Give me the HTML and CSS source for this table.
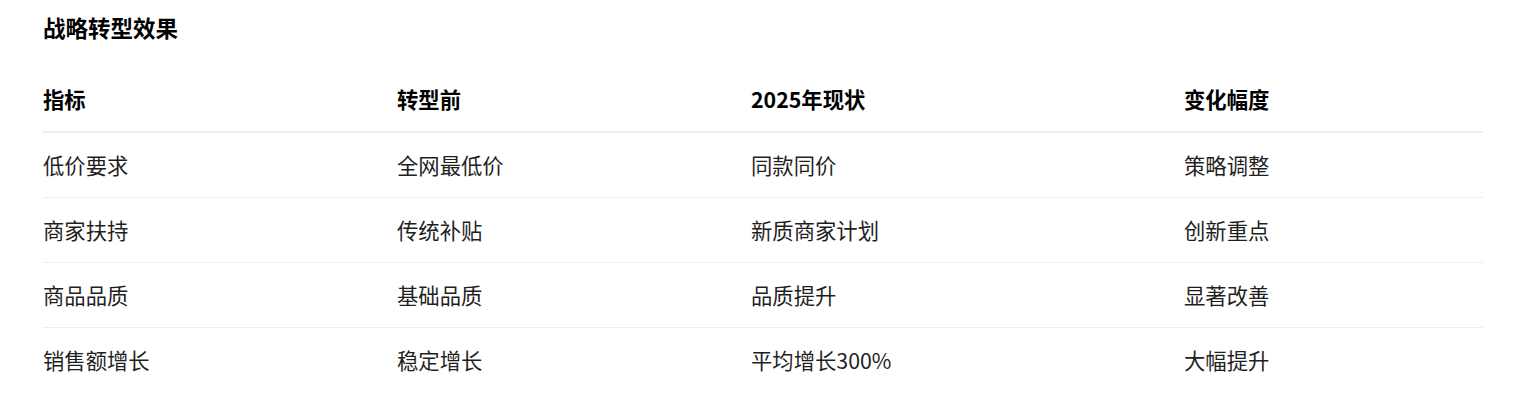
FILE: index.html
```html
<!DOCTYPE html>
<html lang="zh-CN">
<head>
<meta charset="utf-8">
<title>战略转型效果</title>
<link rel="stylesheet" href="styles.css">
</head>
<body>
<div class="page">
  <h3 class="title">战略转型效果</h3>
  <table class="data">
    <thead>
      <tr>
        <th class="c1">指标</th>
        <th class="c2">转型前</th>
        <th class="c3">2025年现状</th>
        <th class="c4">变化幅度</th>
      </tr>
    </thead>
    <tbody>
      <tr><td>低价要求</td><td>全网最低价</td><td>同款同价</td><td>策略调整</td></tr>
      <tr><td>商家扶持</td><td>传统补贴</td><td>新质商家计划</td><td>创新重点</td></tr>
      <tr><td>商品品质</td><td>基础品质</td><td>品质提升</td><td>显著改善</td></tr>
      <tr><td>销售额增长</td><td>稳定增长</td><td>平均增长300%</td><td>大幅提升</td></tr>
    </tbody>
  </table>
</div>
</body>
</html>
```

FILE: styles.css
```css
html, body {
  margin: 0;
  padding: 0;
  background: #ffffff;
}
body {
  font-family: "Noto Sans CJK SC", "Noto Sans", sans-serif;
  color: #1f1f1f;
}
.page {
  padding: 10px 30px 0 43px;
}
.title {
  margin: 0 0 23px 0;
  font-size: 22.5px;
  line-height: 34px;
  font-weight: 700;
  color: #000;
}
.data {
  width: 1440px;
  border-collapse: collapse;
  table-layout: fixed;
  font-size: 21.33px;
}
.data th,
.data td {
  text-align: left;
  padding: 16px 16px 16px 0;
  line-height: 32px;
  white-space: nowrap;
}
.data th {
  font-weight: 700;
  color: #000;
  border-bottom: 2px solid #ececec;
}
.data td {
  font-weight: 400;
  color: #1f1f1f;
  border-bottom: 1px solid #efefef;
}
.data tbody tr:last-child td {
  border-bottom: none;
}
.c1 { width: 338px; }
.c2 { width: 338px; }
.c3 { width: 417px; }
.c4 { width: 283px; }
```
